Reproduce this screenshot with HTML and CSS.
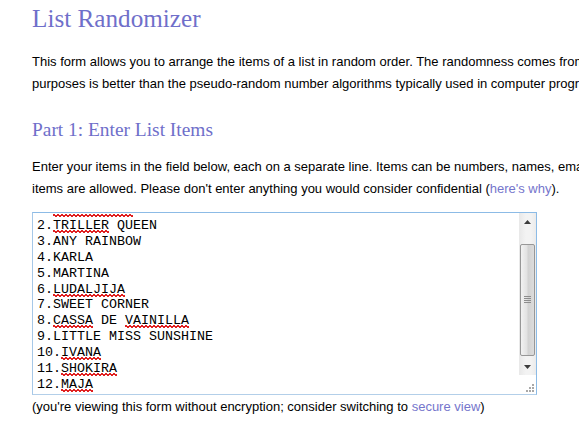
FILE: index.html
```html
<!DOCTYPE html>
<html lang="en">
<head>
    <meta charset="UTF-8">
    <title>List Randomizer</title>
    <link rel="stylesheet" href="styles.css">
</head>
<body>
    <div class="page">
        <h1 class="title">List Randomizer</h1>
        <p class="text">This form allows you to arrange the items of a list in random order. The randomness comes from atmospheric noise, which for many<br>purposes is better than the pseudo-random number algorithms typically used in computer programs.</p>

        <h2 class="subtitle">Part 1: Enter List Items</h2>
        <p class="text">Enter your items in the field below, each on a separate line. Items can be numbers, names, email addresses, etc. A maximum of 10,000<br>items are allowed. Please don't enter anything you would consider confidential (<a href="#">here's why</a>).</p>

        <!-- fake textarea, scrolled down a bit -->
        <div class="listbox">
            <div class="listbox-view">
                <div class="listbox-lines">
                    <div>1.<span class="typo">MONTENEGRO</span></div>
                    <div>2.<span class="typo">TRILLER</span> QUEEN</div>
                    <div>3.ANY RAINBOW</div>
                    <div>4.KARLA</div>
                    <div>5.MARTINA</div>
                    <div>6.<span class="typo">LUDALJIJA</span></div>
                    <div>7.SWEET CORNER</div>
                    <div>8.<span class="typo">CASSA</span> DE <span class="typo">VAINILLA</span></div>
                    <div>9.LITTLE MISS SUNSHINE</div>
                    <div>10.<span class="typo">IVANA</span></div>
                    <div>11.<span class="typo">SHOKIRA</span></div>
                    <div>12.<span class="typo">MAJA</span></div>
                </div>
            </div>
            <div class="scrollbar">
                <div class="scroll-btn">
                    <svg width="7" height="4" viewBox="0 0 7 4"><path d="M0 4 L3.5 0 L7 4 Z" fill="#3c3c3c"/></svg>
                </div>
                <div class="scroll-track">
                    <div class="scroll-thumb">
                        <svg width="7" height="8" viewBox="0 0 7 8">
                            <path d="M0 0.5 H7 M0 2.5 H7 M0 4.5 H7 M0 6.5 H7" stroke="#8d8d8d" stroke-width="1"/>
                        </svg>
                    </div>
                </div>
                <div class="scroll-btn">
                    <svg width="7" height="4" viewBox="0 0 7 4"><path d="M0 0 L3.5 4 L7 0 Z" fill="#3c3c3c"/></svg>
                </div>
                <div class="grip">
                    <svg width="8" height="8" viewBox="0 0 8 8" fill="#a8a8a8">
                        <rect x="6" y="0" width="2" height="2"/>
                        <rect x="3" y="3" width="2" height="2"/>
                        <rect x="6" y="3" width="2" height="2"/>
                        <rect x="0" y="6" width="2" height="2"/>
                        <rect x="3" y="6" width="2" height="2"/>
                        <rect x="6" y="6" width="2" height="2"/>
                    </svg>
                </div>
            </div>
        </div>

        <p class="note">(you're viewing this form without encryption; consider switching to <a href="#">secure view</a>)</p>
    </div>
</body>
</html>
```

FILE: styles.css
```css
html, body {
    margin: 0;
    overflow: hidden;
    background: #ffffff;
}

body {
    font-family: "Liberation Sans", Arial, sans-serif;
    font-size: 13px;
    color: #000000;
}

.page {
    padding: 4px 0 0 32px;
    width: 900px;
}

a {
    color: #7575cc;
    text-decoration: none;
}

.title {
    margin: 0;
    font-family: "Liberation Serif", Georgia, serif;
    font-weight: normal;
    font-size: 25.2px;
    line-height: 30px;
    color: #6f6fca;
}

.subtitle {
    margin: 23px 0 0;
    font-family: "Liberation Serif", Georgia, serif;
    font-weight: normal;
    font-size: 19.4px;
    line-height: 24px;
    color: #6f6fca;
}

.text {
    margin: 17px 0 0;
    line-height: 22px;
    white-space: nowrap;
}

.subtitle + .text {
    margin-top: 14px;
}

.listbox {
    margin-top: 12px;
    width: 503px;
    height: 181px;
    border: 1px solid #8cbbe6;
    border-left-color: #a6c8e8;
    border-bottom-color: #b3cfe9;
    display: flex;
    background: #ffffff;
}

.listbox-view {
    flex: 1;
    overflow: hidden;
    padding-left: 4px;
}

.listbox-lines {
    margin-top: -11px;
    font-family: "Liberation Mono", "Courier New", monospace;
    font-size: 13.33px;
    line-height: 15.9px;
    white-space: nowrap;
}

/* spell-check squiggle */
.typo {
    background-image:
        linear-gradient(45deg, transparent 35%, #e02020 35%, #e02020 65%, transparent 65%),
        linear-gradient(135deg, transparent 35%, #e02020 35%, #e02020 65%, transparent 65%);
    background-size: 4px 3px, 4px 3px;
    background-position: 0 100%, 2px 100%;
    background-repeat: repeat-x;
}

.scrollbar {
    width: 17px;
    display: flex;
    flex-direction: column;
    background: linear-gradient(to right, #e8e8e8, #f3f3f3 40%, #f3f3f3 70%, #ebebeb);
}

.scroll-btn {
    height: 17px;
    display: flex;
    align-items: center;
    justify-content: center;
}

.scroll-track {
    flex: 1;
    display: flex;
    flex-direction: column;
    padding: 14px 0 2px;
}

.scroll-thumb {
    flex: 1;
    margin: 0 1px;
    border: 1px solid #979797;
    border-radius: 2px;
    background: linear-gradient(to right, #f2f2f2, #e2e2e2 45%, #d2d2d2 55%, #dcdcdc);
    display: flex;
    align-items: center;
    justify-content: center;
}

.grip {
    height: 17px;
    background: #ffffff;
    display: flex;
    align-items: flex-end;
    justify-content: flex-end;
    padding: 0 2px 2px 0;
}

.note {
    margin: 1px 0 0;
    line-height: 22px;
    white-space: nowrap;
}
```
